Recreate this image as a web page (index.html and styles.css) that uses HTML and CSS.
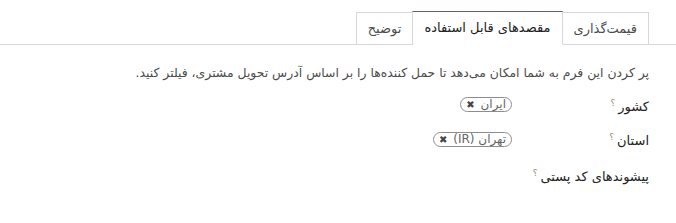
FILE: index.html
```html
<!DOCTYPE html>
<html lang="fa" dir="rtl">
<head>
    <meta charset="UTF-8">
    <title>مقصدهای قابل استفاده</title>
    <link rel="stylesheet" href="styles.css">
</head>
<body>
    <ul class="tabs">
        <li class="tab">قیمت‌گذاری</li>
        <li class="tab active">مقصدهای قابل استفاده</li>
        <li class="tab">توضیح</li>
    </ul>

    <div class="sheet">
        <p class="hint">پر کردن این فرم به شما امکان می‌دهد تا حمل کننده‌ها را بر اساس آدرس تحویل مشتری، فیلتر کنید.</p>

        <div class="group">
            <label class="field-label">کشور<sup>؟</sup></label>
            <div class="field">
                <span class="tag">ایران <span class="tag-x">✖</span></span>
            </div>

            <label class="field-label">استان<sup>؟</sup></label>
            <div class="field">
                <span class="tag">تهران (IR) <span class="tag-x">✖</span></span>
            </div>

            <label class="field-label">پیشوندهای کد پستی<sup>؟</sup></label>
            <div class="field"></div>
        </div>
    </div>
</body>
</html>
```

FILE: styles.css
```css
body {
    margin: 0;
    background-color: white;
    font-family: "DejaVu Sans", sans-serif;
    font-size: 13px;
    color: #4c4c4c;
}
.tabs {
    display: flex;
    align-items: flex-end;
    margin: 11px 0 0 0;
    padding: 0 27px 0 0;
    list-style: none;
    border-bottom: 1px solid #d8d8dc;
}
.tab {
    height: 31px;
    line-height: 31px;
    padding: 0 11px;
    margin-bottom: -1px;
    border: 1px solid #d8d8dc;
    color: #4c4c4c;
    background-color: white;
}
.tab.active {
    height: 32px;
    border-top-color: #6b5a68;
    border-bottom-color: white;
    color: #222;
}
.tab + .tab {
    margin-right: -1px;
}
.sheet {
    padding: 0 27px;
}
.hint {
    margin: 18px 0 0 0;
    line-height: 20px;
    font-size: 12.4px;
}
.group {
    display: grid;
    grid-template-columns: 137px 1fr;
    grid-template-rows: 34px 36px 34px;
    margin-top: 3px;
}
.field-label {
    color: #222;
    line-height: 34px;
}
.field-label sup {
    font-size: 9px;
    color: #9a8a6a;
    margin-right: 3px;
}
.field {
    display: flex;
    align-items: center;
    padding-top: 2px;
}
.tag {
    display: inline-block;
    border: 1px solid #8d8d8d;
    border-radius: 8px;
    padding: 0 5px;
    line-height: 13px;
    font-size: 12px;
    color: #666;
}
.tag-x {
    font-size: 10px;
    color: #444;
    margin-right: 2px;
}
```
